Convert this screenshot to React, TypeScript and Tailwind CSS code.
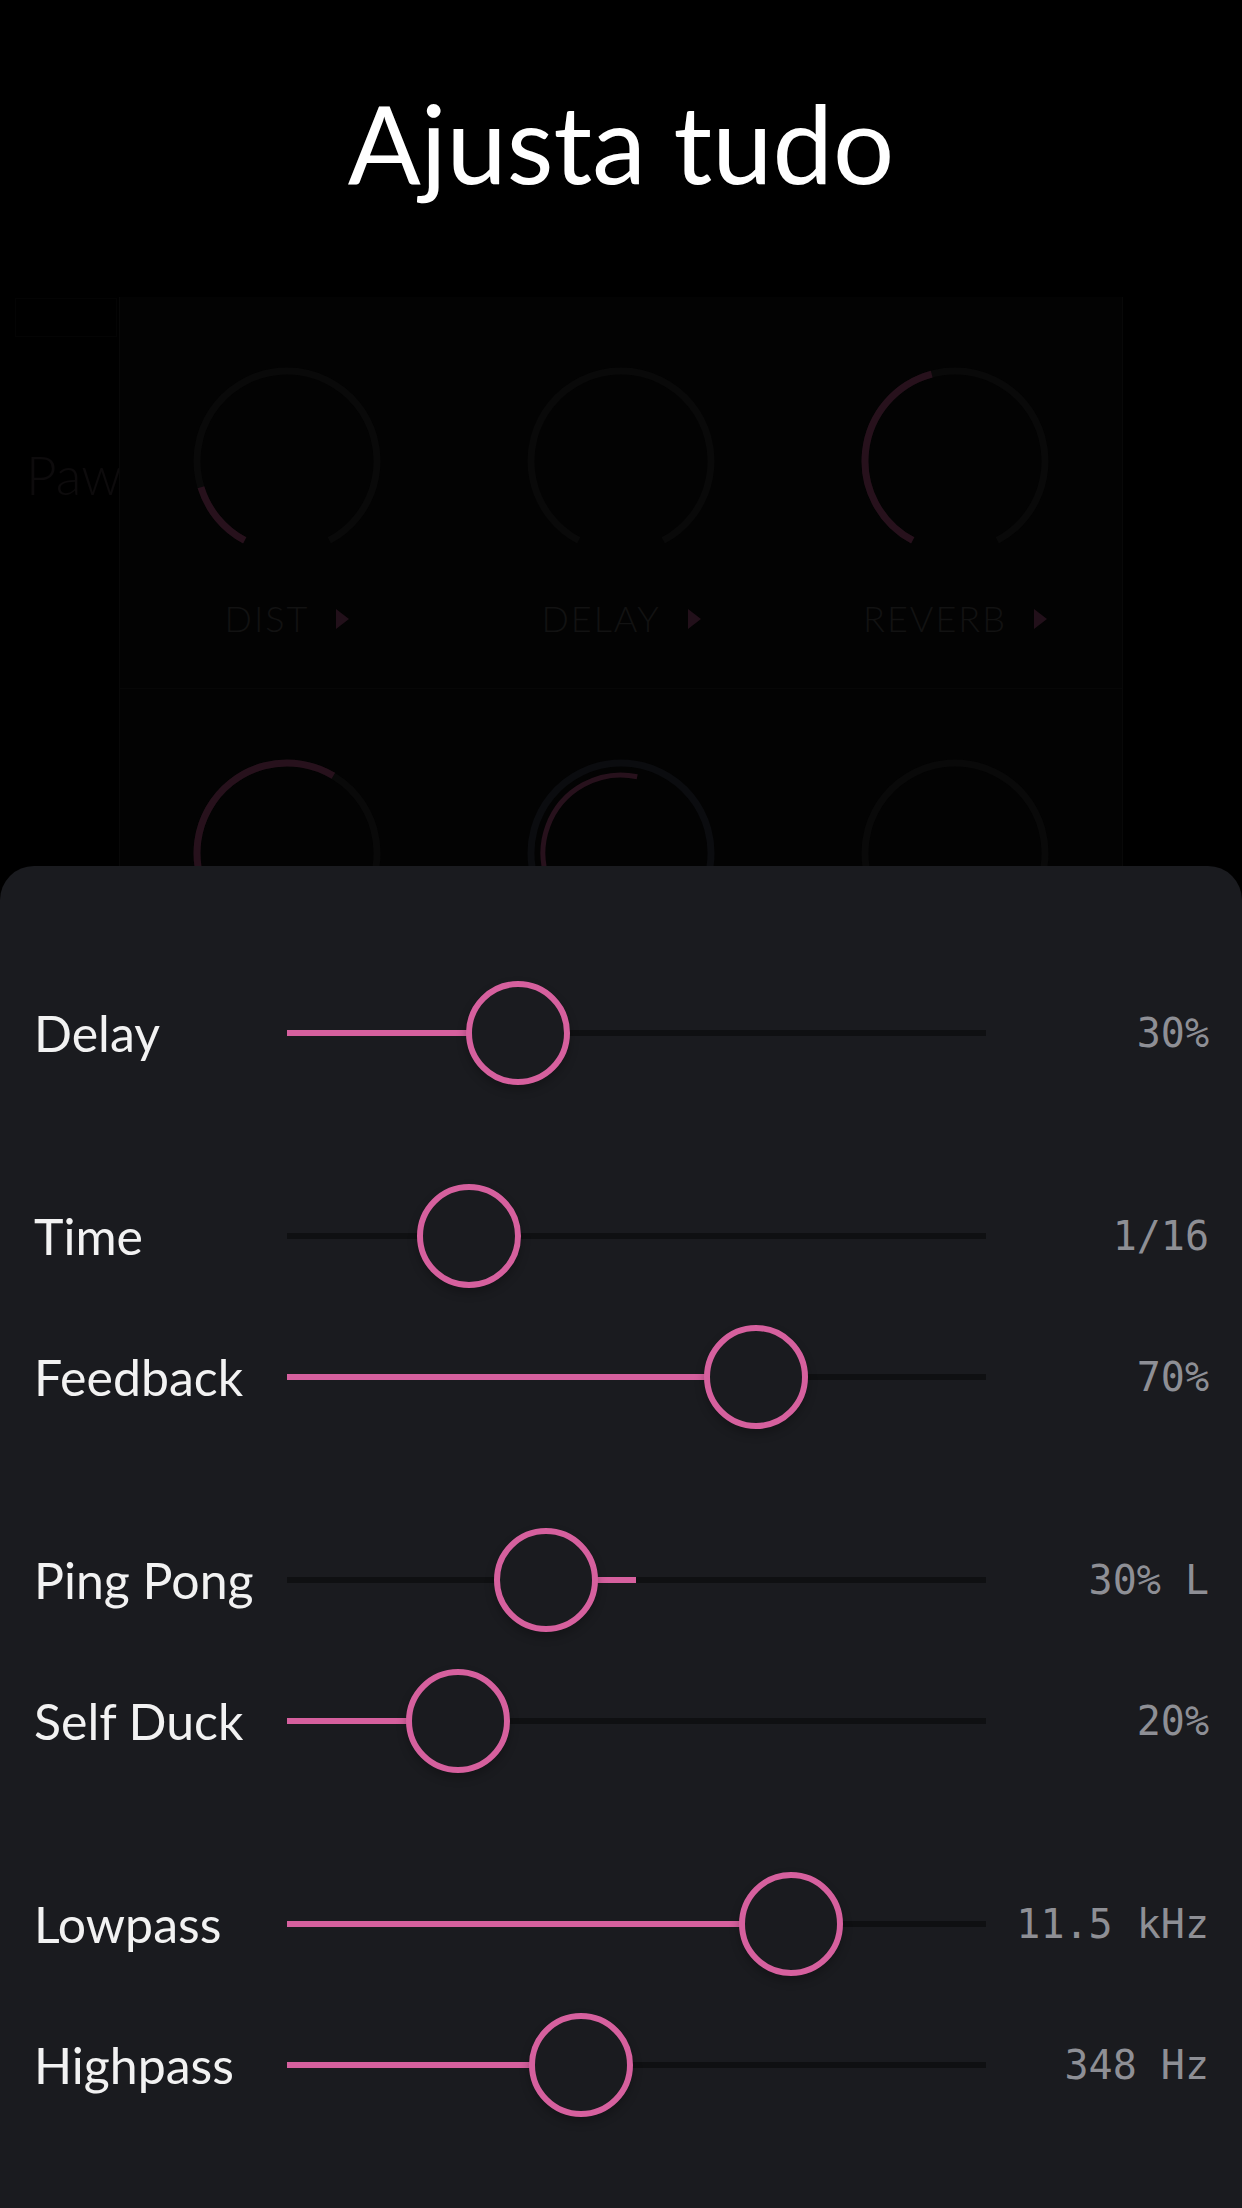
import React from "react";

type Row = { label: string; value: number; text: string; bipolar?: boolean; noFill?: boolean };

const groups: Row[][] = [
  [{ label: "Delay", value: 0.3, text: "30%" }],
  [
    { label: "Time", value: 0.218, text: "1/16", noFill: true },
    { label: "Feedback", value: 0.7, text: "70%" },
  ],
  [
    { label: "Ping Pong", value: 0.348, text: "30% L", bipolar: true },
    { label: "Self Duck", value: 0.2, text: "20%" },
  ],
  [
    { label: "Lowpass", value: 0.76, text: "11.5 kHz" },
    { label: "Highpass", value: 0.407, text: "348 Hz" },
  ],
];

type Knob = { label: string; end?: number; inner?: number; ring?: string };

const knobRows: Knob[][] = [
  [
    { label: "DIST", end: -107 },
    { label: "DELAY" },
    { label: "REVERB", end: -15 },
  ],
  [
    { label: "DRIVE", end: 31 },
    { label: "TONE", inner: 12, ring: "#0b0c0f" },
    { label: "MIX" },
  ],
];

const TRACK = 699;
const THUMB = 104;
const START = -152;
const STOP = 152;

function arc(r: number, a1: number, a2: number) {
  const p = (a: number) => {
    const t = (a * Math.PI) / 180;
    return [100 + r * Math.sin(t), 100 - r * Math.cos(t)];
  };
  const [x1, y1] = p(a1);
  const [x2, y2] = p(a2);
  return `M${x1} ${y1} A${r} ${r} 0 ${a2 - a1 > 180 ? 1 : 0} 1 ${x2} ${y2}`;
}

function KnobCell({ knob }: { knob: Knob }) {
  return (
    <div className="flex flex-col items-center pt-[64px] pb-[48px]">
      <svg width="200" height="200" viewBox="0 0 200 200">
        <path d={arc(90, START, STOP)} fill="none" stroke={knob.ring ?? "#090909"} strokeWidth="7" />
        {knob.end !== undefined && (
          <path d={arc(90, START, knob.end)} fill="none" stroke="#27111c" strokeWidth="7" />
        )}
        {knob.inner !== undefined && (
          <path d={arc(78, START, knob.inner)} fill="none" stroke="#27111c" strokeWidth="5" />
        )}
      </svg>
      <div className="mt-[36px] flex items-center gap-[27px]">
        <span className="font-['Lato'] text-[36px] font-light leading-[1.2] tracking-[2px] text-[#121212]">
          {knob.label}
        </span>
        <svg width="13" height="20" viewBox="0 0 13 20">
          <path d="M0 0 L13 10 L0 20 Z" fill="#22101a" />
        </svg>
      </div>
    </div>
  );
}

function Slider({ value, bipolar, noFill }: { value: number; bipolar?: boolean; noFill?: boolean }) {
  const x = THUMB / 2 + value * (TRACK - THUMB);
  const mid = TRACK / 2;
  const from = bipolar ? Math.min(x, mid) : 0;
  const to = bipolar ? Math.max(x, mid) : x;
  return (
    <div className="relative h-[6px] w-[699px] bg-[#0f1012]">
      {!noFill && <div className="absolute inset-y-0 bg-[#d6609e]" style={{ left: from, width: to - from }} />}
      <div
        className="absolute top-1/2 size-[104px] -translate-x-1/2 -translate-y-1/2 rounded-full border-[6px] border-[#d6609e] bg-[#1a1b1f] shadow-[0_5px_10px_rgba(0,0,0,0.25)]"
        style={{ left: x }}
      />
    </div>
  );
}

export default function App() {
  return (
    <div className="min-h-[2208px] w-[1242px] bg-black">
      <div className="h-[866px] overflow-hidden">
        <h1 className="pt-[88px] text-center font-['Lato'] text-[108px] font-normal leading-none text-white">
          Ajusta tudo
        </h1>

        <div className="mt-[101px] flex">
          <div className="w-[119px] overflow-hidden">
            <div className="ml-[15px] mt-px h-[39px] w-[102px] border border-[#040404]" />
            <div className="ml-[26px] mt-[111px] whitespace-nowrap font-['Lato'] text-[53px] font-light leading-none text-[#0d0b0c]">
              Paw
            </div>
          </div>

          <div className="w-[1004px] border-x border-[#080808] bg-[#030303]">
            {knobRows.map((row, i) => (
              <div key={i} className="grid grid-cols-3 border-b border-[#070707]">
                {row.map((k) => (
                  <KnobCell key={k.label} knob={k} />
                ))}
              </div>
            ))}
          </div>
        </div>
      </div>

      <div className="flex min-h-[1342px] flex-col gap-[62px] rounded-t-[34px] bg-[#1a1b1f] pt-[96px] pb-[74px]">
        {groups.map((g, i) => (
          <div key={i} className="flex flex-col">
            {g.map((r) => (
              <div key={r.label} className="flex h-[141px] items-center pl-[34px] pr-[33px]">
                <div className="w-[253px] font-['Lato'] text-[50px] leading-none text-[#f2f2f2]">{r.label}</div>
                <Slider value={r.value} bipolar={r.bipolar} noFill={r.noFill} />
                <div className="flex-1 text-right font-['DejaVu_Sans_Mono'] text-[40px] leading-none text-[#8e8f95]">
                  {r.text}
                </div>
              </div>
            ))}
          </div>
        ))}
      </div>
    </div>
  );
}
